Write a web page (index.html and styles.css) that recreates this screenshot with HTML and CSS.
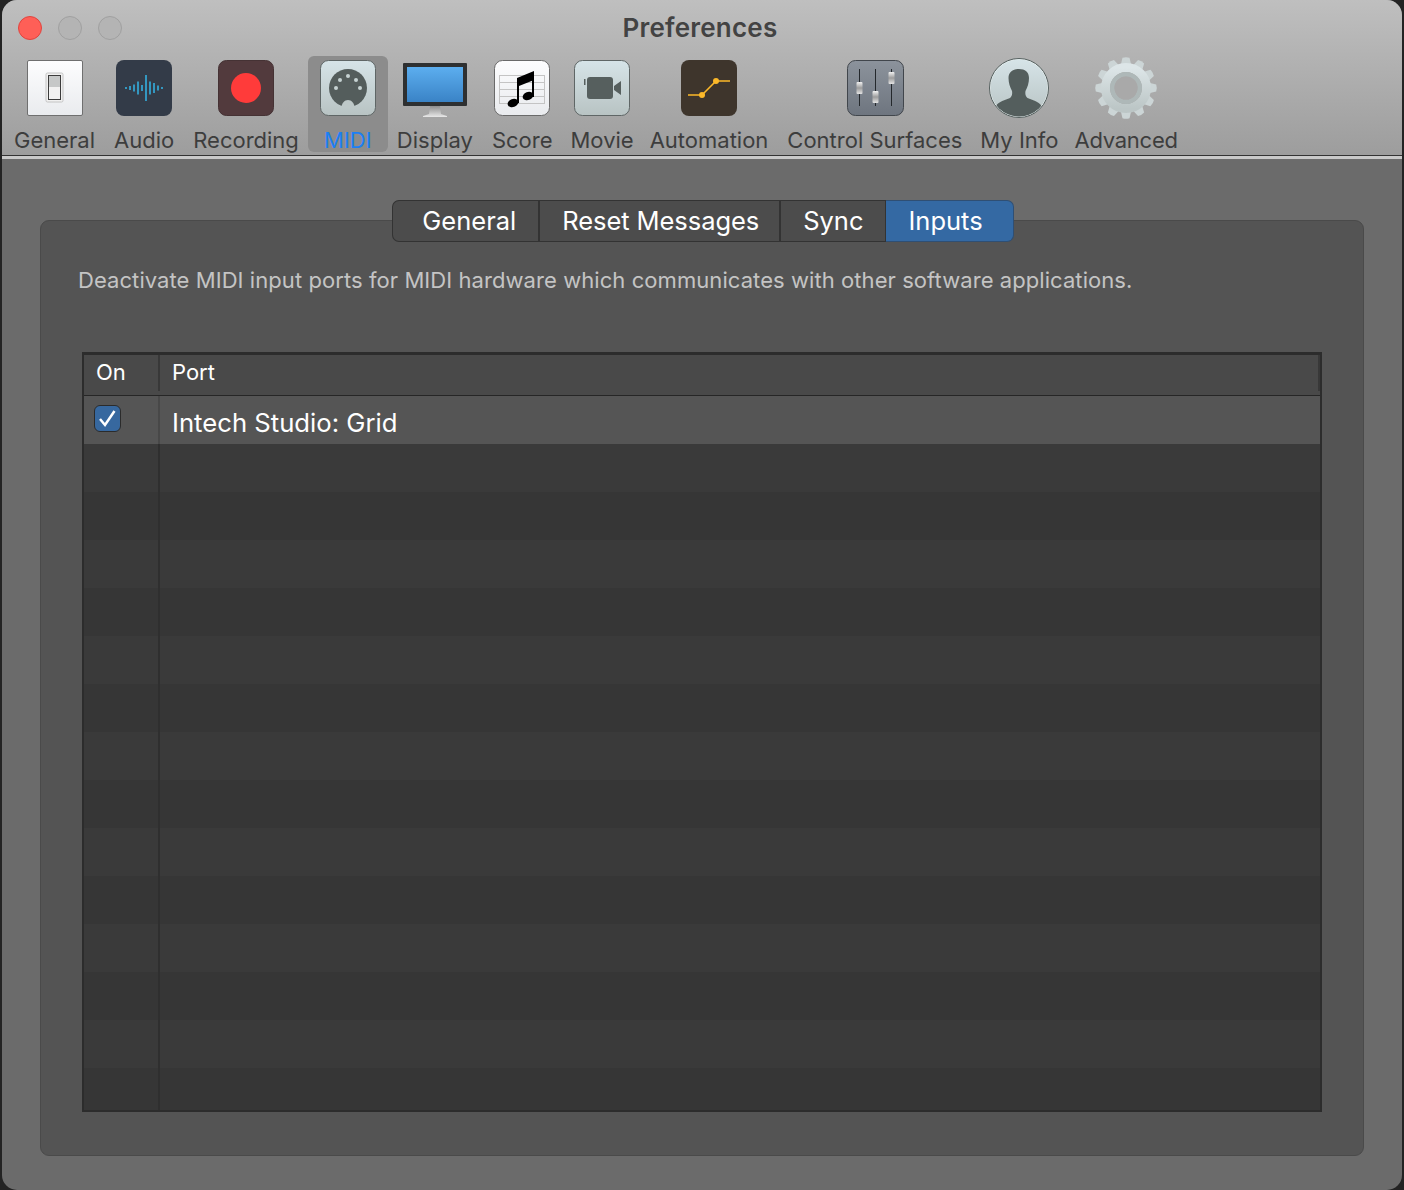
FILE: index.html
```html
<!DOCTYPE html>
<html lang="en">
<head>
    <meta charset="UTF-8">
    <meta name="viewport" content="width=device-width, initial-scale=1.0">
    <title>Preferences</title>
    <link rel="stylesheet" href="styles.css">
</head>
<body>

<div class="window">
    <header class="toolbar">
        <div class="titlebar">
            <div class="lights">
                <span class="light light-close"></span>
                <span class="light"></span>
                <span class="light"></span>
            </div>
            <h1 class="title">Preferences</h1>
        </div>

        <nav class="tools">
            <div class="tool tool-general">
                <svg class="tool-icon" viewBox="0 0 64 64">
                    <defs>
                        <linearGradient id="white-tile" x1="0" y1="0" x2="0" y2="1"><stop offset="0" stop-color="#fdfdfe"/><stop offset="1" stop-color="#e9ebee"/></linearGradient>
                        <linearGradient id="pale-tile" x1="0" y1="0" x2="0" y2="1"><stop offset="0" stop-color="#d6e4e8"/><stop offset="1" stop-color="#b8c3c3"/></linearGradient>
                        <linearGradient id="steel-tile" x1="0" y1="0" x2="0" y2="1"><stop offset="0" stop-color="#8c939c"/><stop offset="1" stop-color="#6e757f"/></linearGradient>
                        <linearGradient id="knob" x1="0" y1="0" x2="0" y2="1"><stop offset="0" stop-color="#f2f2f2"/><stop offset="0.5" stop-color="#9c9c9c"/><stop offset="1" stop-color="#e4e4e4"/></linearGradient>
                        <linearGradient id="screen" x1="0" y1="0" x2="0" y2="1"><stop offset="0" stop-color="#5caeef"/><stop offset="1" stop-color="#3a83c6"/></linearGradient>
                        <linearGradient id="stand" x1="0" y1="0" x2="0" y2="1"><stop offset="0" stop-color="#8d8d8d"/><stop offset="1" stop-color="#e8e8e8"/></linearGradient>
                        <linearGradient id="gear" x1="0" y1="0" x2="0" y2="1"><stop offset="0" stop-color="#dde6e8"/><stop offset="1" stop-color="#bcc6c6"/></linearGradient>
                        <clipPath id="face"><circle cx="32" cy="32" r="28.5"/></clipPath>
                    </defs>
                    <rect x="4.5" y="4.5" width="55" height="55" rx="1.5" fill="url(#white-tile)" stroke="#6f6f6f"/>
                    <rect x="23" y="17" width="17" height="29" rx="1.5" fill="#f0f0f0" stroke="#c4c4c4"/>
                    <rect x="25.5" y="19.5" width="12" height="24" fill="#f2f2f2" stroke="#3c3c3c"/>
                    <rect x="26" y="20" width="11" height="11" fill="#c6c8c8"/>
                </svg>
                <span class="tool-label">General</span>
            </div>
            <div class="tool">
                <svg class="tool-icon" viewBox="0 0 64 64">
                    <rect x="4" y="4" width="56" height="56" rx="8" fill="#333b48"/>
                    <path d="M14 31v2M18 30v4M22 28.5v7M26 25.5v13M30 29v6M34 19v26M38 25.5v13M42 27v10M46 29.5v5M50 31v2" stroke="#35a8d6" stroke-width="1.7" fill="none"/>
                </svg>
                <span class="tool-label">Audio</span>
            </div>
            <div class="tool">
                <svg class="tool-icon" viewBox="0 0 64 64">
                    <rect x="4.5" y="4.5" width="55" height="55" rx="8" fill="#523a3d" stroke="#453234"/>
                    <circle cx="32" cy="32" r="15" fill="#ff3b3a"/>
                </svg>
                <span class="tool-label">Recording</span>
            </div>
            <div class="tool tool-active">
                <svg class="tool-icon" viewBox="0 0 64 64">
                    <rect x="4.5" y="4.5" width="55" height="55" rx="8" fill="url(#pale-tile)" stroke="#5f6666"/>
                    <circle cx="32" cy="32" r="19" fill="#545d5c"/>
                    <path d="M25.500 52c0-5 3-8 6.500-8s6.500 3 6.500 8z" fill="#bdc8c8"/>
                    <g fill="#c6d2d2">
                        <circle cx="20" cy="32" r="2"/><circle cx="24" cy="24" r="2"/><circle cx="32" cy="20" r="2"/><circle cx="40" cy="24" r="2"/><circle cx="44" cy="32" r="2"/>
                    </g>
                </svg>
                <span class="tool-label">MIDI</span>
            </div>
            <div class="tool">
                <svg class="tool-icon" viewBox="0 0 64 64">
                    <path d="M27 50h10l1 8 6 2v1H20v-1l6-2z" fill="url(#stand)"/>
                    <rect x="0" y="7" width="64" height="43" rx="1" fill="#2e3031"/>
                    <rect x="4" y="11" width="56" height="35" fill="url(#screen)"/>
                </svg>
                <span class="tool-label">Display</span>
            </div>
            <div class="tool">
                <svg class="tool-icon" viewBox="0 0 64 64">
                    <rect x="4.500" y="4.500" width="55" height="55" rx="8" fill="url(#white-tile)" stroke="#6a6a6a"/>
                    <path d="M9 19.500h46M9 26.500h46M9 33.500h46M9 40.500h46M9 47.500h46M9.500 19v29M54.500 19v29" stroke="#c4c4c4" fill="none"/>
                    <path d="M27 25l17-7v6l-15 6z" fill="#000"/>
                    <path d="M27 22l17-7v26h-2V20l-13 6v21h-2z" fill="#000"/>
                    <ellipse cx="23" cy="47" rx="5.500" ry="4" transform="rotate(-20 23 47)" fill="#000"/>
                    <ellipse cx="38" cy="40" rx="5.500" ry="4" transform="rotate(-20 38 40)" fill="#000"/>
                </svg>
                <span class="tool-label">Score</span>
            </div>
            <div class="tool tool-movie">
                <svg class="tool-icon" viewBox="0 0 64 64">
                    <rect x="4.500" y="4.500" width="55" height="55" rx="8" fill="url(#pale-tile)" stroke="#5f6666"/>
                    <rect x="17" y="21" width="26" height="22" rx="3" fill="#565f5e"/>
                    <path d="M44 30l7-5v14l-7-5zM14 23h1.500v6H14z" fill="#565f5e"/>
                </svg>
                <span class="tool-label">Movie</span>
            </div>
            <div class="tool tool-automation">
                <svg class="tool-icon" viewBox="0 0 64 64">
                    <rect x="4" y="4" width="56" height="56" rx="8" fill="#3e352c"/>
                    <path d="M11 39h14l14-14h14" stroke="#fbb829" stroke-width="1.600" fill="none"/>
                    <circle cx="25" cy="39" r="3" fill="#fbb829"/>
                    <circle cx="39" cy="25" r="3" fill="#fbb829"/>
                </svg>
                <span class="tool-label">Automation</span>
            </div>
            <div class="tool">
                <svg class="tool-icon" viewBox="0 0 64 64">
                    <rect x="4.500" y="4.500" width="56" height="55" rx="8" fill="url(#steel-tile)" stroke="#41464c"/>
                    <path d="M16.500 13v37M32.500 13v37M48.500 13v37" stroke="#24282c" fill="none"/>
                    <rect x="13.500" y="26" width="6" height="12" rx="1" fill="url(#knob)"/>
                    <rect x="29.500" y="35" width="6" height="12" rx="1" fill="url(#knob)"/>
                    <rect x="45.500" y="16" width="6" height="12" rx="1" fill="url(#knob)"/>
                </svg>
                <span class="tool-label">Control Surfaces</span>
            </div>
            <div class="tool tool-info">
                <svg class="tool-icon" viewBox="0 0 64 64">
                    <circle cx="32" cy="32" r="29.500" fill="#e6eeee" stroke="#55605f"/>
                    <circle cx="32" cy="32" r="28.500" fill="url(#pale-tile)"/>
                    <path clip-path="url(#face)" d="M32 13c6 0 10 3 10 9 0 5-1.500 9-3.500 13-.5 3 0 5.500 2 7 5 2.500 11 3 14 8v14H9V50c3-5 9-5.500 14-8 2-1.500 2.500-4 2-7-2-4-3.500-8-3.500-13 0-6 4.500-9 10.500-9z" fill="#545e5d"/>
                </svg>
                <span class="tool-label">My Info</span>
            </div>
            <div class="tool tool-advanced">
                <svg class="tool-icon" viewBox="0 0 64 64">
                    <g fill="#ccd5d6">
                        <path id="tooth" d="M28.500 1.800Q32 .6 35.500 1.800L37.500 10H26.500z"/>
                        <use href="#tooth" transform="rotate(30 32 32)"/>
                        <use href="#tooth" transform="rotate(60 32 32)"/>
                        <use href="#tooth" transform="rotate(90 32 32)"/>
                        <use href="#tooth" transform="rotate(120 32 32)"/>
                        <use href="#tooth" transform="rotate(150 32 32)"/>
                        <use href="#tooth" transform="rotate(180 32 32)"/>
                        <use href="#tooth" transform="rotate(210 32 32)"/>
                        <use href="#tooth" transform="rotate(240 32 32)"/>
                        <use href="#tooth" transform="rotate(270 32 32)"/>
                        <use href="#tooth" transform="rotate(300 32 32)"/>
                        <use href="#tooth" transform="rotate(330 32 32)"/>
                    </g>
                    <circle cx="32" cy="32" r="20.500" fill="none" stroke="url(#gear)" stroke-width="9"/>
                    <circle cx="32" cy="32" r="13.750" fill="none" stroke="#aeb8b8" stroke-width="4.500"/>
                    <circle cx="32" cy="32" r="11.500" fill="#a9a9a9"/>
                </svg>
                <span class="tool-label">Advanced</span>
            </div>
        </nav>
    </header>

    <main class="content">
        <div class="tabs">
            <button class="tab">General</button>
            <button class="tab tab-reset">Reset Messages</button>
            <button class="tab">Sync</button>
            <button class="tab tab-active">Inputs</button>
        </div>

        <section class="panel">
            <p class="hint">Deactivate MIDI input ports for MIDI hardware which communicates with other software applications.</p>

            <div class="ports">
                <div class="ports-head">
                    <div class="col-on">On</div>
                    <div class="col-port">Port</div>
                </div>
                <div class="port-row">
                    <div class="col-on">
                        <span class="checkbox">
                            <svg viewBox="0 0 25 25"><path d="M5 13l5 6 9.500-14" stroke="#fff" stroke-width="2.500" fill="none"/></svg>
                        </span>
                    </div>
                    <div class="col-port">Intech Studio: Grid</div>
                </div>
                <div class="empty-rows"></div>
            </div>
        </section>
    </main>
</div>

</body>
</html>
```

FILE: styles.css
```css
* {
    margin: 0;
    padding: 0;
    box-sizing: border-box;
}

html, body {
    height: 100%;
}

body {
    font-family: Inter, "Noto Sans", sans-serif;
    background-color: #232323;
    padding: 0 2px;
    overflow: hidden;
}

.window {
    height: 1190px;
    display: flex;
    flex-direction: column;
    background-color: #6b6b6b;
    border-radius: 15px;
    overflow: hidden;
}

/* toolbar */
.toolbar {
    height: 159px;
    flex: none;
    background: linear-gradient(#bfbfbf, #9d9d9d 155px);
    border-bottom: 3px solid #c9c9c9;
    box-shadow: inset 0 -1px 0 #333;
}

.titlebar {
    height: 56px;
    display: flex;
    align-items: center;
    padding: 0 16px 2px;
}

.lights {
    display: flex;
    gap: 16px;
    width: 104px;
    margin-top: 2px;
}

.light {
    width: 24px;
    height: 24px;
    border-radius: 50%;
    background-color: #b4b4b4;
    border: 1px solid #a0a0a0;
}

.light-close {
    background-color: #fe5f57;
    border-color: #e0443e;
}

.title {
    flex: 1;
    text-align: center;
    padding-right: 108px;
    font-size: 26px;
    font-weight: 600;
    letter-spacing: .2px;
    color: #434343;
}

.tools {
    display: flex;
    padding-left: 12px;
    gap: 19px;
}

.tool {
    height: 96px;
    display: flex;
    flex-direction: column;
    align-items: center;
}

.tool-icon {
    width: 64px;
    height: 64px;
    margin: 0 -4px;
    flex: none;
}

.tool-label {
    margin-top: 8px;
    font-size: 22px;
    line-height: 24px;
    color: #3d3d3d;
    white-space: nowrap;
}

.tool-active {
    width: 80px;
    margin: 0 -10px;
    background-color: #8c8c8c;
    border-radius: 6px;
}

.tool-active .tool-label {
    color: #1b7ff5;
}

.tool-movie {
    margin-left: -1px;
}

.tool-automation {
    margin-left: -3px;
}

.tool-info {
    margin-left: -1px;
}

.tool-advanced {
    margin-left: -3px;
}

.tool-advanced .tool-label {
    letter-spacing: -.25px;
}

/* tabs and panel */
.content {
    flex: 1;
    display: flex;
    flex-direction: column;
    padding: 41px 38px 34px;
}

.tabs {
    display: flex;
    justify-content: center;
    padding-left: 2px;
    margin-bottom: -22px;
    position: relative;
}

.tab {
    height: 42px;
    padding: 0 22px 2px;
    font-family: inherit;
    font-size: 25.5px;
    color: #fff;
    background-color: #4c4c4c;
    border: 1px solid #333;
    border-left: none;
    border-right-width: 2px;
}

.tab:first-child {
    padding-left: 29px;
    border-left: 1px solid #333;
    border-radius: 7px 0 0 7px;
}

.tab:last-child {
    margin-left: -1px;
    padding-right: 30px;
    border-right-width: 1px;
    border-radius: 0 7px 7px 0;
}

.tab-reset {
    padding-right: 20px;
    letter-spacing: -.07px;
}

.tab-active {
    background-color: #3469a3;
    border-color: #2f4f74;
}

.panel {
    flex: 1;
    display: flex;
    flex-direction: column;
    background-color: #545454;
    border: 1px solid #4a4a4a;
    border-radius: 9px;
    padding: 46px 41px 43px;
}

.hint {
    margin: 0 -4px 59px;
    font-size: 22px;
    line-height: 26px;
    letter-spacing: .07px;
    color: #c4c4c4;
    white-space: nowrap;
}

/* port table */
.ports {
    flex: 1;
    display: flex;
    flex-direction: column;
    border: 2px solid #2c2c2c;
    border-top-width: 3px;
    overflow: hidden;
    color: #fff;
}

.ports-head {
    height: 41px;
    flex: none;
    display: flex;
    align-items: flex-start;
    font-size: 22px;
    background-color: #494949;
    border-bottom: 1px solid #262626;
}

.ports-head .col-on,
.ports-head .col-port {
    height: 36px;
    display: flex;
    align-items: center;
    padding-bottom: 2px;
    border-right: 2px solid #383838;
}

.col-on {
    width: 76px;
    flex: none;
    padding-left: 12px;
}

.col-port {
    flex: 1;
    padding-left: 12px;
}

.port-row {
    height: 48px;
    flex: none;
    display: flex;
    align-items: center;
    font-size: 25.7px;
    background-color: #555;
}

.port-row .col-on {
    height: 100%;
    display: flex;
    align-items: center;
    padding-left: 10px;
    padding-bottom: 3px;
    border-right: 2px solid #484848;
}

.port-row .col-port {
    padding-top: 4px;
}

.checkbox {
    width: 27px;
    height: 27px;
    display: block;
    background-color: #37689f;
    border: 1px solid #2b2b2b;
    border-radius: 6px;
}

.checkbox svg {
    width: 25px;
    height: 25px;
    display: block;
}

.empty-rows {
    flex: 1;
    background:
        linear-gradient(#2f2f2f, #2f2f2f) 74px 0 / 2px 100% no-repeat,
        repeating-linear-gradient(#3a3a3a 0, #3a3a3a 48px, #363636 48px, #363636 96px);
}
```
